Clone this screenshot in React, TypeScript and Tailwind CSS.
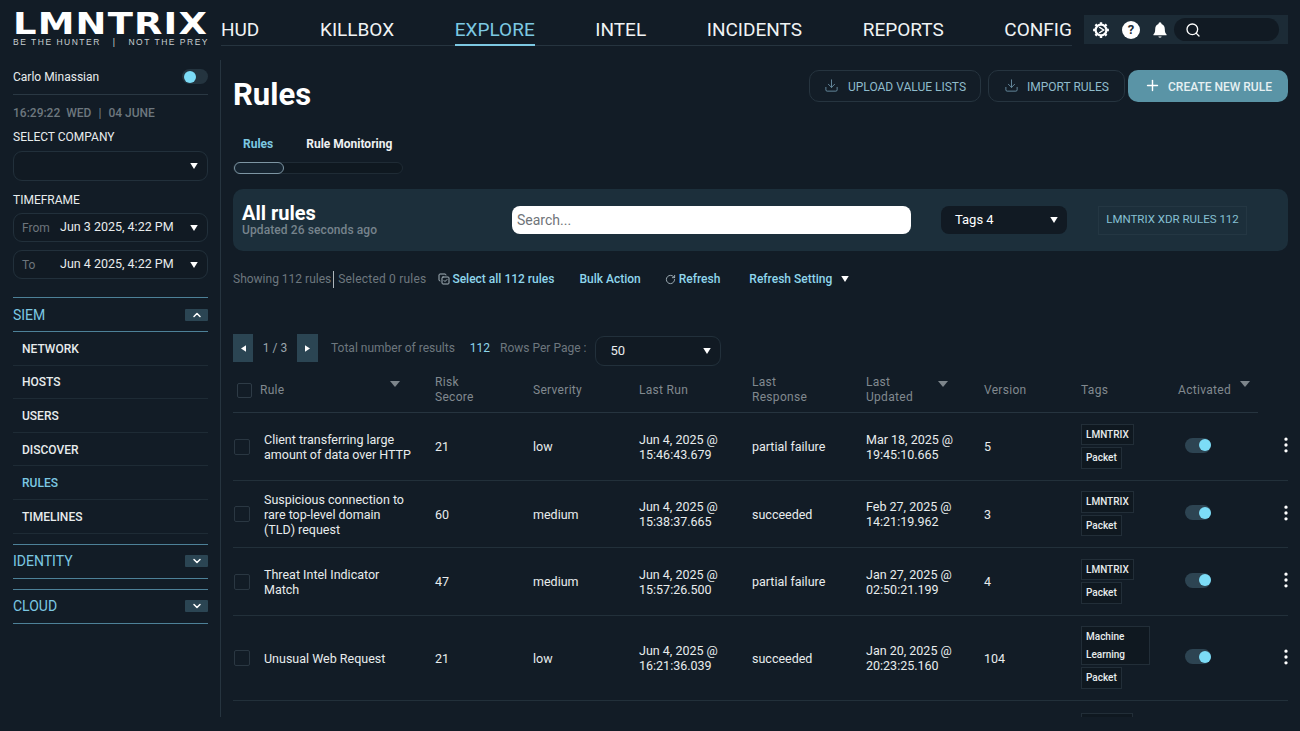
import { ChevronDown, ChevronUp, CopyCheck, Download, MoreVertical, Plus, RotateCw, Search } from 'lucide-react';

const navItems = ['HUD', 'KILLBOX', 'EXPLORE', 'INTEL', 'INCIDENTS', 'REPORTS', 'CONFIG'];
const siemItems = ['NETWORK', 'HOSTS', 'USERS', 'DISCOVER', 'RULES', 'TIMELINES'];

const rows = [
  { name: 'Client transferring large amount of data over HTTP', risk: '21', severity: 'low', run: ['Jun 4, 2025 @', '15:46:43.679'], response: 'partial failure', updated: ['Mar 18, 2025 @', '19:45:10.665'], version: '5', tags: ['LMNTRIX', 'Packet'], height: 'h-[68px]' },
  { name: 'Suspicious connection to rare top-level domain (TLD) request', risk: '60', severity: 'medium', run: ['Jun 4, 2025 @', '15:38:37.665'], response: 'succeeded', updated: ['Feb 27, 2025 @', '14:21:19.962'], version: '3', tags: ['LMNTRIX', 'Packet'], height: 'h-[67px]' },
  { name: 'Threat Intel Indicator Match', risk: '47', severity: 'medium', run: ['Jun 4, 2025 @', '15:57:26.500'], response: 'partial failure', updated: ['Jan 27, 2025 @', '02:50:21.199'], version: '4', tags: ['LMNTRIX', 'Packet'], height: 'h-[68px]' },
  { name: 'Unusual Web Request', risk: '21', severity: 'low', run: ['Jun 4, 2025 @', '16:21:36.039'], response: 'succeeded', updated: ['Jan 20, 2025 @', '20:23:25.160'], version: '104', tags: ['Machine Learning', 'Packet'], height: 'h-[85px]' },
];

function Caret({ className = '' }: { className?: string }) {
  return (
    <svg viewBox="0 0 10 8" className={`w-[8px] h-[6px] fill-white ${className}`}>
      <path d="M0 0h10L5 8z" />
    </svg>
  );
}

function Toggle({ off, className = '' }: { off?: boolean; className?: string }) {
  return (
    <div className={`w-[26px] h-[15px] rounded-full relative ${off ? 'bg-[#24343f]' : 'bg-[#2d4452]'} ${className}`}>
      <div className={`absolute top-[1.5px] w-[12px] h-[12px] rounded-full bg-[#7cdcf7] ${off ? 'left-[2px]' : 'right-0'}`} />
    </div>
  );
}

function SidebarGroup({ label, open }: { label: string; open?: boolean }) {
  return (
    <div className="h-[33px] flex items-center justify-between border-y border-[#4d8198] box-content">
      <span className="pt-[1px] text-[14px] text-[#7cc8e2]">{label}</span>
      <span className="w-[23px] h-[12px] bg-[#2b4553] rounded-[1px] flex items-center justify-center">
        {open ? <ChevronUp size={12} strokeWidth={3} className="text-white" /> : <ChevronDown size={12} strokeWidth={3} className="text-white" />}
      </span>
    </div>
  );
}

function DateField({ label, value }: { label: string; value: string }) {
  return (
    <div className="h-[29px] rounded-[9px] border border-[#22303b] bg-[#111a23] flex items-center pl-[8px] pr-[9px]">
      <span className="w-[38px] text-[12px] text-[#6d757c]">{label}</span>
      <span className="flex-1 text-[12.5px] text-[#e8eced]">{value}</span>
      <Caret />
    </div>
  );
}

function Sidebar() {
  return (
    <aside className="w-[221px] shrink-0 h-[731px] pl-[13px] pr-[13px] pt-[8px]">
      <div className="h-[30px] w-[196px]">
        <div className="origin-left scale-x-[1.19] font-['DejaVu_Sans'] font-bold text-[31px] leading-[30px] tracking-[1px] text-white whitespace-nowrap">LMNTRIX</div>
      </div>
      <div className="h-[8px] w-[196px] flex items-center justify-between font-['Liberation_Sans'] text-[8.5px] leading-[8px] tracking-[1.5px] text-[#c9cfd2] whitespace-nowrap">
        <span>BE THE HUNTER</span>
        <span>|</span>
        <span>NOT THE PREY</span>
      </div>
      <div className="mt-[16px] h-[33px] flex items-center justify-between border-b border-[#2a3843] pb-[2px]">
        <span className="text-[12px] text-[#e8eced]">Carlo Minassian</span>
        <Toggle off className="mb-[1px]" />
      </div>
      <div className="mt-[11px] flex text-[12px] leading-[14px] font-medium text-[#6d777e]">
        <span>16:29:22</span>
        <span className="ml-[6px]">WED</span>
        <span className="ml-[7px]">|</span>
        <span className="ml-[7px]">04 JUNE</span>
      </div>
      <div className="mt-[10px] text-[12px] leading-[14px] text-[#e8eced]">SELECT COMPANY</div>
      <div className="mt-[7px] h-[30px] rounded-[9px] border border-[#22303b] bg-[#111a23] flex items-center justify-end pr-[9px]">
        <Caret />
      </div>
      <div className="mt-[12px] text-[12px] leading-[14px] text-[#e8eced]">TIMEFRAME</div>
      <div className="mt-[6px] flex flex-col gap-[8px]">
        <DateField label="From" value="Jun 3 2025, 4:22 PM" />
        <DateField label="To" value="Jun 4 2025, 4:22 PM" />
      </div>
      <div className="mt-[18px]">
        <SidebarGroup label="SIEM" open />
        {siemItems.map((item) => (
          <div key={item} className="h-[33.6px] pt-[1px] pl-[9px] flex items-center border-b border-[#1e2b35] text-[12px] font-medium">
            <span className={item === 'RULES' ? 'text-[#7cc8e2]' : 'text-[#e8eced]'}>{item}</span>
          </div>
        ))}
      </div>
      <div className="mt-[10px] flex flex-col gap-[10px]">
        <SidebarGroup label="IDENTITY" />
        <SidebarGroup label="CLOUD" />
      </div>
    </aside>
  );
}

function GearIcon() {
  return (
    <svg viewBox="0 0 24 24" className="w-[18px] h-[18px]" fill="none" stroke="white">
      <circle cx="12" cy="12" r="7.2" strokeWidth="3" />
      <path d="M12 1.5v3M12 19.5v3M1.5 12h3M19.5 12h3M4.6 4.6l2.1 2.1M17.3 17.3l2.1 2.1M4.6 19.4l2.1-2.1M17.3 6.7l2.1-2.1" strokeWidth="3.2" />
      <path d="M9.5 8l6 4-6 4" strokeWidth="2" />
    </svg>
  );
}

function HelpIcon() {
  return (
    <div className="w-[18px] h-[18px] rounded-full bg-white flex items-center justify-center text-[13px] leading-none font-bold text-[#1c2b36]">?</div>
  );
}

function BellIcon() {
  return (
    <svg viewBox="0 0 24 24" className="w-[18px] h-[18px] fill-white">
      <path d="M12 1.5a2 2 0 0 0-2 2v.6C7.3 5 5.6 7.5 5.6 10.5c0 4-.8 5.5-2.4 7.5v1h17.6v-1c-1.600-2-2.400-3.500-2.400-7.500 0-3-1.700-5.500-4.400-6.400v-.6a2 2 0 0 0-2-2zM9.800 20.500a2.300 2.300 0 0 0 4.400 0z" />
    </svg>
  );
}

function TopBar() {
  return (
    <div className="h-[60px] flex items-start">
      <nav className="w-[851px] h-[46px] border-b border-[#26343f] flex items-end justify-between">
        {navItems.map((item) => (
          <div key={item} className="relative h-[31px] pt-[1px] flex items-center">
            <span className={`text-[19px] ${item === 'EXPLORE' ? 'text-[#7cc8e2]' : 'text-[#f0f3f4]'}`}>{item}</span>
            {item === 'EXPLORE' && <div className="absolute left-0 right-0 bottom-[-1px] h-[2px] bg-[#7cc8e2]" />}
          </div>
        ))}
      </nav>
      <div className="ml-[12px] mt-[15px] w-[204px] h-[29px] bg-[#1c2b36] flex items-center pl-[8px] pr-[9px]">
        <GearIcon />
        <div className="ml-[12px]"><HelpIcon /></div>
        <div className="ml-[11px]"><BellIcon /></div>
        <div className="ml-[5px] flex-1 h-[23px] rounded-full bg-[#111a23] flex items-center pl-[11px]">
          <Search size={16} className="text-white" />
        </div>
      </div>
    </div>
  );
}

function HeaderActions() {
  return (
    <div className="flex items-center">
      <button className="w-[172px] h-[32px] pt-[1px] rounded-[10px] border border-[#26343f] bg-[#131d27] flex items-center justify-center gap-[9px] text-[12px] text-[#8fbccb]">
        <Download size={15} strokeWidth={1.5} className="text-[#688ca0] -mt-[3px]" />
        UPLOAD VALUE LISTS
      </button>
      <button className="ml-[7px] w-[137px] h-[32px] pt-[1px] rounded-[10px] border border-[#26343f] bg-[#131d27] flex items-center justify-center gap-[8px] text-[12px] text-[#8fbccb]">
        <Download size={15} strokeWidth={1.5} className="text-[#688ca0] -mt-[3px]" />
        IMPORT RULES
      </button>
      <button className="ml-[3px] w-[160px] h-[32px] pt-[1px] rounded-[10px] bg-[#5a94a6] flex items-center justify-center gap-[7px] text-[12px] font-medium text-[#e6f0f2]">
        <Plus size={17} strokeWidth={2} className="text-white -mt-[3px]" />
        CREATE NEW RULE
      </button>
    </div>
  );
}

const headerGrid = 'grid grid-cols-[31px_171px_98px_106px_113px_114px_118px_97px_97px_80px] w-[1025px]';
const rowGrid = 'grid grid-cols-[31px_171px_98px_106px_113px_114px_118px_97px_104px_92px_11px]';

function SortCaret({ className = '' }: { className?: string }) {
  return (
    <svg viewBox="0 0 10 6" className={`absolute w-[10px] h-[6px] fill-[#7d858b] ${className}`}>
      <path d="M0 0h10L5 6z" />
    </svg>
  );
}

function TableHeader() {
  return (
    <div className={`${headerGrid} h-[47px] pt-[2px] border-b border-[#26343f] items-center text-[12px] leading-[15px] text-[#81898f] tracking-[0.3px]`}>
      <div className="pl-[4px]"><div className="w-[15px] h-[15px] rounded-[2px] border border-[#2e3b46]" /></div>
      <div className="relative h-full flex items-center"><span className="-ml-[4px]">Rule</span><SortCaret className="right-[35px] top-[13px]" /></div>
      <div>Risk<br />Secore</div>
      <div>Serverity</div>
      <div>Last Run</div>
      <div>Last<br />Response</div>
      <div className="relative h-full flex items-center"><span>Last<br />Updated</span><SortCaret className="right-[36px] top-[13px]" /></div>
      <div>Version</div>
      <div>Tags</div>
      <div className="relative h-full flex items-center">Activated<SortCaret className="right-[8px] top-[13px]" /></div>
    </div>
  );
}

function Tag({ label }: { label: string }) {
  return (
    <div className="w-fit max-w-[69px] border border-[#222e38] bg-[#0f1820] px-[4px] py-[1px] text-[10px] leading-[17.500px] font-medium text-[#e8eced]">
      {label}
    </div>
  );
}

function RuleRow({ row }: { row: (typeof rows)[number] }) {
  return (
    <div className={`${rowGrid} ${row.height} border-b border-[#22303a] items-center text-[12.5px] leading-[15px] text-[#e8eced]`}>
      <div className="pl-[1px]"><div className="w-[16px] h-[16px] rounded-[2px] border border-[#2a3742]" /></div>
      <div className="pr-[22px]">{row.name}</div>
      <div>{row.risk}</div>
      <div>{row.severity}</div>
      <div>{row.run[0]}<br />{row.run[1]}</div>
      <div>{row.response}</div>
      <div>{row.updated[0]}<br />{row.updated[1]}</div>
      <div>{row.version}</div>
      <div className="-mt-[1px] flex flex-col gap-[2px]">
        {row.tags.map((t) => <Tag key={t} label={t} />)}
      </div>
      <div className="-mt-[3px]"><Toggle /></div>
      <div className="-mt-[3px] flex justify-end"><MoreVertical size={20} strokeWidth={2} className="shrink-0 text-white -mr-[8px]" /></div>
    </div>
  );
}

export default function App() {
  return (
    <div className="w-[1300px] h-[731px] overflow-hidden bg-[#121c26] flex font-['Roboto',sans-serif]">
      <Sidebar />
      <main className="flex-1 min-w-0">
        <TopBar />
        <div className="h-[657px] border-l border-[#26343f] -ml-px pl-[12px] pr-[12px] overflow-hidden">
          <div className="flex items-start justify-between pt-[10px]">
            <h1 className="pt-[1px] text-[31px] leading-[48px] font-bold text-white">Rules</h1>
            <HeaderActions />
          </div>
          <div className="mt-[17px] flex items-center pl-[10px] text-[12px] font-bold leading-[16px]">
            <span className="text-[#7cc8e2]">Rules</span>
            <span className="ml-[33px] text-[#eef1f2]">Rule Monitoring</span>
          </div>
          <div className="mt-[10px] w-[170px] h-[12px] rounded-full border border-[#1f2b35] bg-[#0f1820]">
            <div className="w-[50px] h-[12px] -mt-px rounded-full border border-[#7d95a3] bg-[#162430]" />
          </div>
          <section className="mt-[15px] h-[62px] rounded-[10px] bg-[#1c2f3b] flex items-center pl-[9px]">
            <div className="w-[270px]">
              <div className="text-[20px] leading-[20px] font-bold text-white">All rules</div>
              <div className="text-[12px] leading-[14px] font-medium text-[#76838c] tracking-[0.1px]">Updated 26 seconds ago</div>
            </div>
            <div className="w-[399px] h-[28px] rounded-[8px] bg-white flex items-center pl-[5px] text-[14px] text-[#6f7479]">Search...</div>
            <div className="ml-[30px] w-[126px] h-[28px] rounded-[8px] bg-[#111a23] flex items-center justify-between pl-[14px] pr-[9px] text-[13px] text-white">
              Tags 4
              <Caret />
            </div>
            <div className="ml-[31px] w-[149px] h-[29px] border border-[#243743] flex items-center justify-center text-[11.5px] text-[#86c0d3] whitespace-nowrap">
              LMNTRIX XDR RULES 112
            </div>
          </section>
          <div className="mt-[20px] h-[16px] flex items-center text-[12px] whitespace-nowrap">
            <span className="text-[#6d777e]">Showing 112 rules</span>
            <span className="ml-[2px] mr-[4px] w-px h-[17px] bg-[#aeb6bb]" />
            <span className="text-[#6d777e] tracking-[0.2px]">Selected 0 rules</span>
            <span className="ml-[12px] flex items-center gap-[2px] font-medium text-[#8fd6ec]">
              <CopyCheck size={12} className="text-[#a5b3bb]" />
              Select all 112 rules
            </span>
            <span className="ml-[25px] font-medium text-[#8fd6ec]">Bulk Action</span>
            <span className="ml-[24px] flex items-center gap-[3px] font-medium text-[#8fd6ec]">
              <RotateCw size={11} className="text-[#a5b3bb]" />
              Refresh
            </span>
            <span className="ml-[29px] font-medium text-[#8fd6ec]">Refresh Setting</span>
            <Caret className="ml-[9px]" />
          </div>
          <div className="mt-[47px] h-[31px] flex items-start text-[12px]">
            <button className="w-[20px] h-[28px] bg-[#2b4553] flex items-center justify-center">
              <svg viewBox="0 0 6 8" className="w-[5px] h-[7px] fill-white"><path d="M6 0v8L0 4z" /></svg>
            </button>
            <div className="w-[44px] h-[28px] flex items-center justify-center text-[#9aa5ac]">1 / 3</div>
            <button className="w-[21px] h-[28px] bg-[#2b4553] flex items-center justify-center">
              <svg viewBox="0 0 6 8" className="w-[5px] h-[7px] fill-white"><path d="M0 0v8l6-4z" /></svg>
            </button>
            <div className="ml-[13px] h-[28px] flex items-center text-[#6d777e] whitespace-nowrap">Total number of results</div>
            <div className="ml-[15px] h-[28px] flex items-center text-[#8fd6ec]">112</div>
            <div className="ml-[10px] h-[28px] flex items-center text-[#6d777e] whitespace-nowrap">Rows Per Page :</div>
            <div className="ml-[9px] mt-[2px] w-[126px] h-[30px] rounded-[9px] border border-[#22303b] bg-[#111a23] flex items-center justify-between pl-[14px] pr-[9px] text-[13px] text-[#e8eced]">
              50
              <Caret />
            </div>
          </div>
          <div className="mt-[1px]">
            <TableHeader />
            {rows.map((row) => <RuleRow key={row.name} row={row} />)}
            <div className={`${rowGrid} h-[16px] overflow-hidden`}>
              <div className="col-start-9 mt-[12px] h-[8px] w-[52px] border border-[#222e38] bg-[#0f1820]" />
            </div>
          </div>
        </div>
      </main>
    </div>
  );
}
